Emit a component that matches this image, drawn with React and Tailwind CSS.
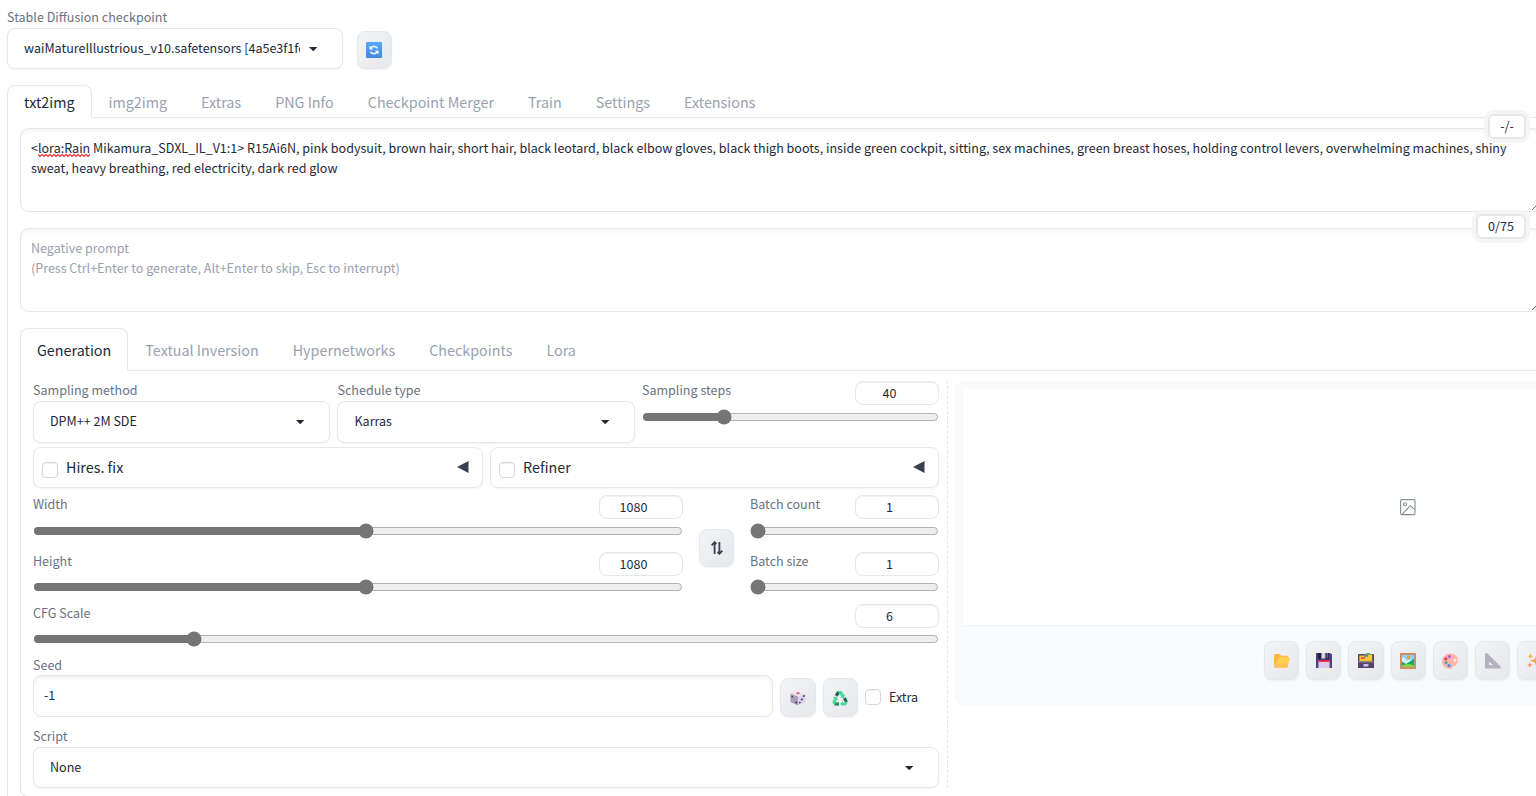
import React, { useState } from "react";
import { clsx } from "clsx";

const MAIN_TABS = [
  "txt2img",
  "img2img",
  "Extras",
  "PNG Info",
  "Checkpoint Merger",
  "Train",
  "Settings",
  "Extensions",
];

const EXTRA_TABS = [
  "Generation",
  "Textual Inversion",
  "Hypernetworks",
  "Checkpoints",
  "Lora",
];

/* ---------- icons ---------- */

const RefreshIcon = () => (
  <svg width="16" height="16" viewBox="0 0 16 16">
    <defs>
      <linearGradient id="refresh-bg" x1="0" y1="0" x2="0" y2="1">
        <stop offset="0" stopColor="#57a8fb" />
        <stop offset="1" stopColor="#4287e0" />
      </linearGradient>
    </defs>
    <rect width="16" height="16" rx="1" fill="url(#refresh-bg)" />
    <path
      d="M4.6 6.6A3.9 3.9 0 0 1 11.6 6.4M11.4 9.4A3.9 3.9 0 0 1 4.4 9.6"
      fill="none"
      stroke="#e8f1fd"
      strokeWidth="1.7"
    />
    <path d="M3.4 3.4V7.6H7.4ZM12.6 12.6V8.4H8.6Z" fill="#e8f1fd" />
  </svg>
);

const DiceIcon = () => (
  <svg width="16" height="16" viewBox="0 0 16 16">
    <path d="M8 .6 15.4 3.6 8 6.4.6 3.6Z" fill="#eee5ec" />
    <path d="M.4 3.6 8 6.4V15.6L1.4 12.6Q.4 12 .4 11Z" fill="#aaa0b8" />
    <path d="M15.6 3.6 8 6.4V15.6L14.6 12.6Q15.6 12 15.6 11Z" fill="#dfd3e8" />
    <ellipse cx="8" cy="3.2" rx="1.8" ry="1" fill="#e2607a" />
    <g fill="#432f68">
      <circle cx="2.2" cy="6.6" r=".9" />
      <circle cx="6.2" cy="12.6" r="1" />
      <circle cx="13.8" cy="6" r=".9" />
      <circle cx="11.8" cy="9.4" r="1" />
      <circle cx="9.8" cy="12.6" r=".9" />
    </g>
  </svg>
);

const RecycleIcon = () => (
  <svg width="16" height="16" viewBox="0 0 16 16">
    <path d="M5.2.9H9.6L12.2 5 13.2 4.4 12 8.2 8.2 7.4 9.4 6.7 7 3Z" fill="#4bdb9b" />
    <path d="M5.2.9 7.6 3.4 5.8 6.6 2.8 5Z" fill="#24635c" />
    <path d="M.8 7.2 4.8 6.4 6 10 4.8 9.4 3.6 12.6H6.6V15.4H2.4L.3 12.4 2 8Z" fill="#4bdb9b" />
    <path d="M2.4 15.4 3.6 12.4H7V15.4Z" fill="#2b8772" />
    <path d="M8 14 10.6 11.2V12.6H12.6L14 10 15.8 12 13.8 15.4H10.6V16Z" fill="#4bdb9b" />
    <path d="M11 8.8 13.8 7.2 15.8 11.4 12.8 12Z" fill="#24635c" />
  </svg>
);

const FolderIcon = () => (
  <svg width="16" height="16" viewBox="0 0 16 16">
    <path d="M0 2.6Q0 1 1.6 1H5.4L7.4 2.8H12.4Q14 2.8 14 4.4V14H0Z" fill="#ffb73c" />
    <path d="M4.2 5.4Q4.6 4.2 5.8 4.2H14.8Q16.2 4.2 15.8 5.6L13.8 13.4Q13.4 14.8 12 14.8H1.4Q0 14.8.6 13.2Z" fill="#ffcf4b" />
    <path d="M1.4 11.2H14.4L13.8 13.4Q13.4 14.8 12 14.8H1.4Q0 14.8.6 13.2Z" fill="#ffbf5b" />
  </svg>
);

const FloppyIcon = () => (
  <svg width="16" height="16" viewBox="0 0 16 16">
    <path d="M0 0H14L16 1.6V15H0Z" fill="#4b407f" />
    <path d="M2 0H13V6H2Z" fill="#28203f" />
    <rect x="5.4" y="0" width="4" height="5.6" fill="#d9d0e6" />
    <rect x="10.4" y="0" width="1.8" height="5" fill="#6b5b8a" />
    <rect x="2.4" y="7" width="11.2" height="8" fill="#dccbe8" />
    <rect x="2.4" y="7" width="11.2" height="1.8" fill="#e4173c" />
  </svg>
);

const ArchiveIcon = () => (
  <svg width="16" height="16" viewBox="0 0 16 16">
    <path d="M0 2Q0 1 1 1H15Q16 1 16 2V15H0Z" fill="#54436b" />
    <path d="M1.4 2.4H6L7 1.4H14.2V8.6H1.4Z" fill="#fdc93c" />
    <rect x="8" y="0" width="4" height="1.4" fill="#3ecb7c" />
    <rect x="6" y="2" width="4" height="1.8" fill="#4c93a6" />
    <rect x="3" y="4" width="4" height="2" fill="#ef5b45" />
    <rect x="0" y="8.4" width="16" height="1.2" fill="#8a7a92" />
    <rect x="5.4" y="11" width="5" height="2.6" rx=".6" fill="#cfbdf0" />
  </svg>
);

const FrameIcon = () => (
  <svg width="16" height="16" viewBox="0 0 16 16">
    <rect width="16" height="16" fill="#d48b66" />
    <rect x="1.8" y="2" width="12.4" height="12" fill="#86d3fb" />
    <path d="M2 5Q4 3.8 5.4 6L7 7.4 10 6.4 14.2 7.6V11H2Z" fill="#d7eefb" />
    <circle cx="8.6" cy="4.4" r="1.6" fill="#f79b2d" />
    <path d="M1.8 8.6 6 11 9.2 9 14.2 5.4V14H1.8Z" fill="#21a558" />
    <path d="M1.8 12.6Q8 9.4 14.2 12.6V14H1.8Z" fill="#8ad454" />
  </svg>
);

const PaletteIcon = () => (
  <svg width="16" height="16" viewBox="0 0 16 16">
    <path
      d="M8.4.6C12.8.6 16 3.6 16 7.2 16 10.4 14 12.8 11.6 12.8 10 12.8 10.8 15.8 8.4 15.8 3.8 15.8 0 12.8 0 8.4 0 4 4 .6 8.4.6Z"
      fill="#ffb3a3"
    />
    <ellipse cx="13" cy="7.3" rx="1.5" ry="1.7" fill="#ececf0" />
    <circle cx="7.4" cy="3.6" r="1.6" fill="#b95bd6" />
    <circle cx="3.8" cy="5.8" r="1.6" fill="#dc3272" />
    <circle cx="4" cy="9.8" r="1.5" fill="#45a5a0" />
    <circle cx="7" cy="12.6" r="1.6" fill="#3f8ff2" />
  </svg>
);

const RulerIcon = () => (
  <svg width="16" height="16" viewBox="0 0 16 16">
    <path d="M0 .6Q1-.4 2 .6L15.6 14Q16.4 15.2 15 15.4H1Q0 15.4 0 14.4ZM4 8.4V12H8Z" fill="#b5b0bd" fillRule="evenodd" />
    <path d="M2.4 1.2 15.6 14.2" stroke="#b39fd0" strokeWidth="1.4" strokeDasharray="1.2 1.4" />
  </svg>
);

const SparklesIcon = () => (
  <svg width="16" height="16" viewBox="0 0 16 16">
    <path d="M9.6 1.4 11.2 6 16 7.8 11.2 9.6 9.6 14.4 7.8 9.6 3 7.8 7.8 6Z" fill="#f9a34f" />
    <path d="M3.4.2 4.3 2.4 6.4 3.2 4.3 4 3.4 6.2 2.6 4 .4 3.2 2.6 2.4Z" fill="#fbb04a" />
    <path d="M2.8 9.2 3.6 11.2 5.8 12 3.6 12.8 2.8 15 2 12.8 0 12 2 11.2Z" fill="#f98c62" />
  </svg>
);

const ImageIcon = () => (
  <svg
    width="18"
    height="18"
    viewBox="0 0 18 18"
    fill="none"
    stroke="#868e99"
    strokeWidth="1.1"
    strokeLinejoin="round"
  >
    <rect x="1.6" y="1.6" width="14.4" height="15" rx="1.4" />
    <circle cx="6" cy="6.2" r="1.5" />
    <path d="M3 16.4 11.4 7.6 16 11.6" />
  </svg>
);

const GALLERY_TOOLS = [
  FolderIcon,
  FloppyIcon,
  ArchiveIcon,
  FrameIcon,
  PaletteIcon,
  RulerIcon,
  SparklesIcon,
];

/* ---------- form pieces ---------- */

const Label = ({ children, className = "leading-5" }) => (
  <span
    className={clsx("block h-5 whitespace-nowrap text-gray-500", className)}
  >
    {children}
  </span>
);

const Dropdown = ({ value, className }) => (
  <div
    className={clsx(
      "flex items-center rounded-lg border border-gray-200 bg-white pl-4 shadow-xs",
      className
    )}
  >
    <span className="flex-1 overflow-hidden whitespace-nowrap">{value}</span>
    <svg className="ml-1 mr-5 mt-px" width="18" height="18" viewBox="0 0 18 18">
      <path d="M5 7h8.4L9.2 11.2Z" fill="#1f2937" />
    </svg>
  </div>
);

const ToolButton = ({ children, className }) => (
  <button
    type="button"
    className={clsx(
      "flex shrink-0 items-center justify-center rounded-lg border border-gray-200 bg-linear-to-br from-gray-100 to-gray-200 shadow-xs",
      className
    )}
  >
    {children}
  </button>
);

const Slider = ({ label, min, max, step = 1, initial, className, gap }) => {
  const [value, setValue] = useState(initial);
  return (
    <div className={className}>
      <div className="flex justify-between">
        <Label className="leading-[18px]">{label}</Label>
        <div className="h-6 w-[84px] rounded-lg border border-gray-200 pr-[15px] text-center leading-[21px] inset-shadow-2xs">
          {value}
        </div>
      </div>
      <input
        type="range"
        min={min}
        max={max}
        step={step}
        value={value}
        onChange={(e) => setValue(Number(e.target.value))}
        className={clsx("m-0 block h-4 w-full accent-[#757575]", gap || "mt-1")}
      />
    </div>
  );
};

const Checkbox = ({ className }) => (
  <span
    className={clsx(
      "block size-4 shrink-0 rounded border border-gray-300 bg-white inset-shadow-2xs",
      className
    )}
  />
);

const Accordion = ({ title, className }) => (
  <div
    className={clsx(
      "flex h-[41px] items-center rounded-lg border border-gray-200 pl-2 pr-[13px] shadow-xs",
      className
    )}
  >
    <Checkbox className="mt-1" />
    <span className="mb-0.5 ml-2 flex-1 text-[14.33px] leading-5">{title}</span>
    <svg className="mb-px" width="12" height="12" viewBox="0 0 12 12">
      <path d="M0 6 11.5 0V12Z" fill="#374151" />
    </svg>
  </div>
);

const Tabs = ({ items, active, onSelect, height }) => (
  <div className={clsx("flex border-b border-gray-200 text-[14.33px]", height)}>
    {items.map((item) => (
      <button
        key={item}
        type="button"
        onClick={() => onSelect(item)}
        className={clsx(
          "-mb-px whitespace-nowrap border px-4",
          item === active
            ? "-ml-px rounded-t-lg border-gray-200 border-b-white bg-white text-gray-800"
            : "border-transparent text-gray-400"
        )}
      >
        {item}
      </button>
    ))}
  </div>
);

// spell checker style underline
const Misspelled = ({ children }) => (
  <span className="relative">
    {children}
    <svg className="absolute -bottom-px left-0 h-[5px] w-full">
      <defs>
        <pattern id="squiggle" width="4" height="5" patternUnits="userSpaceOnUse">
          <path
            d="M-1 .5 0 1.5 2 3.5 4 1.5 5 .5"
            fill="none"
            stroke="#f03030"
            strokeWidth="1.2"
          />
        </pattern>
      </defs>
      <rect width="100%" height="5" fill="url(#squiggle)" />
    </svg>
  </span>
);

const PromptBox = ({ counter, badge, children }) => (
  <div className="relative">
    <div className="h-[84px] resize-y overflow-hidden rounded-lg border border-gray-200 px-2.5 py-[9px] leading-5 inset-shadow-sm">
      {children}
    </div>
    <div
      className={clsx(
        "absolute -top-3.5 right-[15px] h-[25px] rounded-md border-2 border-gray-200 bg-white text-center leading-[19px] ring-4 ring-neutral-100",
        badge
      )}
    >
      {counter}
    </div>
  </div>
);

const App = () => {
  const [mainTab, setMainTab] = useState("txt2img");
  const [extraTab, setExtraTab] = useState("Generation");

  return (
    <div className="h-[796px] w-full overflow-hidden bg-white font-['Noto_Sans_CJK_SC','Source_Sans_Pro',sans-serif] text-[12.54px] text-gray-800">
      <div className="w-[1547px] pl-[7px] pt-[7px]">
        {/* Checkpoint picker */}
        <div className="flex items-end">
          <div>
            <Label>Stable Diffusion checkpoint</Label>
            <Dropdown
              className="mt-px h-[41px] w-[336px]"
              value="waiMatureIllustrious_v10.safetensors [4a5e3f1fc9]"
            />
          </div>
          <ToolButton className="ml-3.5 h-[38px] w-[35px] pr-px">
            <RefreshIcon />
          </ToolButton>
        </div>

        {/* Main tabs */}
        <div className="mt-4 w-[1560px] pl-px">
          <Tabs
            items={MAIN_TABS}
            active={mainTab}
            onSelect={setMainTab}
            height="h-[33px]"
          />
        </div>

        <div className="h-[700px] border-l border-gray-200 pl-3 pr-1.5 pt-2.5">
          <PromptBox counter="-/-" badge="w-[38px]">
            &lt;<Misspelled>lora:Rain</Misspelled> Mikamura_SDXL_IL_V1:1&gt;
            R15Ai6N, pink bodysuit, brown hair, short hair, black leotard,
            black elbow gloves, black thigh boots, inside green cockpit,
            sitting, sex machines, green breast hoses, holding control levers,
            overwhelming machines, shiny
            <br />
            sweat, heavy breathing, red electricity, dark red glow
          </PromptBox>

          <div className="mt-4 text-gray-400">
            <PromptBox counter="0/75" badge="w-[50px] text-gray-800">
              Negative prompt
              <br />
              (Press Ctrl+Enter to generate, Alt+Enter to skip, Esc to
              interrupt)
            </PromptBox>
          </div>

          {/* Generation tabs */}
          <div className="mt-4 w-[1540px] pl-px">
            <Tabs
              items={EXTRA_TABS}
              active={extraTab}
              onSelect={setExtraTab}
              height="h-[43px]"
            />
          </div>

          <div className="flex h-[426px] w-[1900px] rounded-bl-lg border-b border-l border-gray-200 pl-3 pt-2.5">
            {/* Settings column */}
            <div className="w-[906px] shrink-0">
              <div className="flex gap-[7.4px]">
                <div className="w-[297.1px]">
                  <Label className="leading-[18px]">Sampling method</Label>
                  <Dropdown className="h-[42px] pb-px" value="DPM++ 2M SDE" />
                </div>
                <div className="w-[297.1px]">
                  <Label className="leading-[18px]">Schedule type</Label>
                  <Dropdown className="h-[42px] pb-px" value="Karras" />
                </div>
                <Slider
                  className="flex-1"
                  label="Sampling steps"
                  min={1}
                  max={150}
                  initial={40}
                />
              </div>

              <div className="mt-1 flex gap-[7px]">
                <Accordion className="w-[450px]" title="Hires. fix" />
                <Accordion className="flex-1" title="Refiner" />
              </div>

              <div className="mt-[7px] flex">
                <div className="w-[650px]">
                  <Slider label="Width" min={64} max={2048} step={8} initial={1080} />
                  <Slider
                    className="mt-[13px]"
                    gap="mt-[3px]"
                    label="Height"
                    min={64}
                    max={2048}
                    step={8}
                    initial={1080}
                  />
                </div>
                <ToolButton className="ml-4 mt-[34px] h-[38px] w-[35px]">
                  <svg
                    width="12"
                    height="14"
                    viewBox="0 0 12 14"
                    fill="none"
                    stroke="#374151"
                    strokeWidth="1.8"
                  >
                    <path d="M.6 4.4 3.6 1.2 5.4 3.2M3.6 1.4V13M11.4 9.6 8.4 12.8 6.6 10.8M8.4 12.6V1" />
                  </svg>
                </ToolButton>
                <div className="ml-4 flex-1">
                  <Slider label="Batch count" min={1} max={100} initial={1} />
                  <Slider
                    className="mt-[13px]"
                    gap="mt-[3px]"
                    label="Batch size"
                    min={1}
                    max={8}
                    initial={1}
                  />
                </div>
              </div>

              <Slider
                className="mt-[9px]"
                gap="mt-[3px]"
                label="CFG Scale"
                min={1}
                max={30}
                step={0.5}
                initial={6}
              />

              <div className="mt-2 flex items-end">
                <div className="w-[740px]">
                  <Label>Seed</Label>
                  <div className="h-[42px] rounded-lg border border-gray-200 px-2.5 leading-[38px] inset-shadow-sm">
                    -1
                  </div>
                </div>
                <ToolButton className="ml-[7px] h-[39px] w-9">
                  <DiceIcon />
                </ToolButton>
                <ToolButton className="ml-[7px] h-[39px] w-[35px] pr-px">
                  <RecycleIcon />
                </ToolButton>
                <Checkbox className="mb-3 ml-[7px]" />
                <span className="mb-2.5 ml-2 leading-5">Extra</span>
              </div>

              <div className="mt-[9px]">
                <Label>Script</Label>
                <Dropdown className="mt-px h-[41px]" value="None" />
              </div>
            </div>

            {/* Resize handle */}
            <div className="ml-2 h-[407px] border-l border-dashed border-gray-200" />

            {/* Gallery */}
            <div className="ml-[7px] h-[324px] w-[906px] shrink-0 rounded-lg bg-gray-50 p-2">
              <div className="flex h-[236px] items-center justify-center bg-white shadow-xs">
                <ImageIcon />
              </div>
              <div className="mt-4 flex gap-[7px] pl-[301px]">
                {GALLERY_TOOLS.map((Icon, idx) => (
                  <ToolButton key={idx} className="h-[39px] w-[35.2px]">
                    <Icon />
                  </ToolButton>
                ))}
              </div>
            </div>
          </div>
        </div>
      </div>
    </div>
  );
};

export default App;
